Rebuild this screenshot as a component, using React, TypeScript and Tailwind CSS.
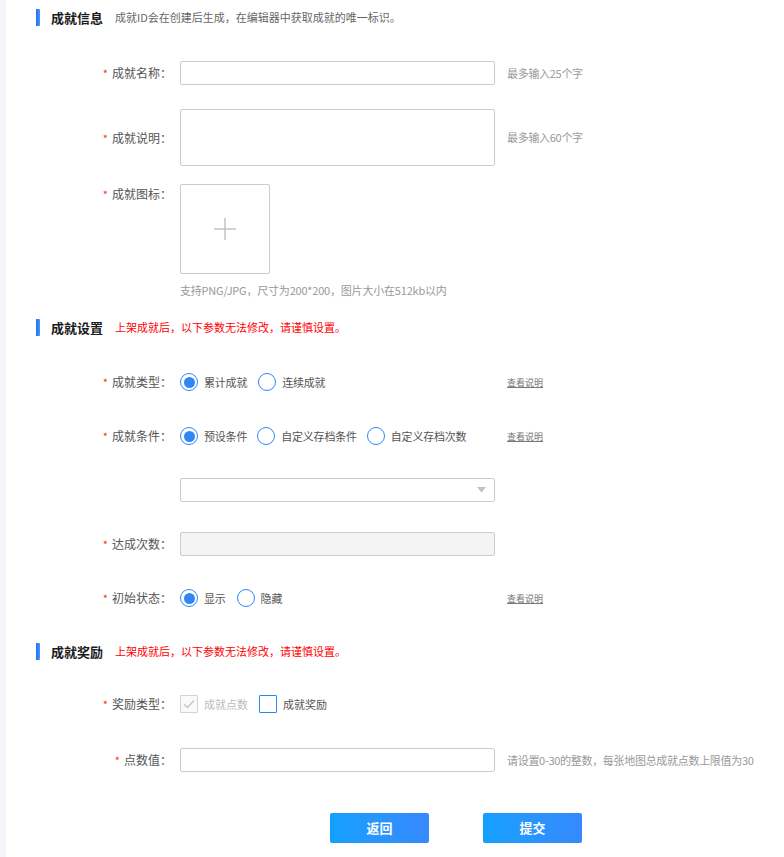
import type React from "react";

const FONT = { fontFamily: '"Noto Sans CJK SC", "Noto Sans", sans-serif' };

function SectionHeader({ title, note, warn }: { title: string; note: string; warn?: boolean }) {
  return (
    <div className="flex items-center h-[18px]">
      <div className="w-[4px] h-[17px] bg-gradient-to-r from-[#1a73f0] to-[#4a95f7] rounded-r-[1px]" />
      <span className="ml-[11px] text-[13px] font-bold text-[#1c1c1c] leading-none">{title}</span>
      <span className={`ml-[12px] text-[11px] leading-none ${warn ? "text-[#ff0000]" : "text-[#666]"}`}>{note}</span>
    </div>
  );
}

function Row({
  label,
  top,
  align = "center",
  children,
}: {
  label: string;
  top: string;
  align?: "center" | "start";
  children: React.ReactNode;
}) {
  return (
    <div className={`flex ${align === "center" ? "items-center" : "items-start"} ${top}`}>
      <label className={`w-[144px] pr-[8px] text-right text-[12px] text-[#555] leading-none ${align === "start" ? "pt-[4px]" : ""}`}>
        <span className="text-[#ff2d2d] mr-[4px] text-[11px]">*</span>
        {label}：
      </label>
      {children}
    </div>
  );
}

function Radio({ checked, label }: { checked?: boolean; label: string }) {
  return (
    <div className="flex items-center gap-[6px]">
      <span className="w-[18px] h-[18px] rounded-full border-[1.5px] border-[#2f86f6] flex items-center justify-center bg-white">
        {checked && <span className="w-[11px] h-[11px] rounded-full bg-[#2f86f6]" />}
      </span>
      <span className="text-[11px] text-[#555] leading-none tracking-[-0.2px]">{label}</span>
    </div>
  );
}

function Hint({ text }: { text: string }) {
  return <span className="ml-[12px] text-[11px] text-[#999] leading-none tracking-[-0.3px]">{text}</span>;
}

function HelpLink() {
  return <span className="ml-[13px] text-[9px] text-[#777] underline leading-none">查看说明</span>;
}

export default function App() {
  return (
    <div className="flex min-h-screen bg-white" style={FONT}>
      <div className="w-[6px] shrink-0 bg-[#f4f5f9]" />
      <div className="flex-1 pl-[30px] pt-[8px] pb-[14px]">
        <SectionHeader title="成就信息" note="成就ID会在创建后生成，在编辑器中获取成就的唯一标识。" />

        <Row label="成就名称" top="mt-[35px]">
          <div className="w-[315px] h-[24px] border border-[#c8ccd3] rounded-[2px] bg-white" />
          <Hint text="最多输入25个字" />
        </Row>

        <Row label="成就说明" top="mt-[24px]">
          <div className="w-[315px] h-[57px] border border-[#c8ccd3] rounded-[2px] bg-white" />
          <Hint text="最多输入60个字" />
        </Row>

        <Row label="成就图标" top="mt-[18px]" align="start">
          <div className="flex flex-col">
            <div className="w-[90px] h-[90px] border border-[#c8ccd3] rounded-[2px] flex items-center justify-center">
              <svg width="24" height="24" viewBox="0 0 24 24">
                <path d="M12 1v22M1 12h22" stroke="#c4c4c4" strokeWidth="1.5" />
              </svg>
            </div>
            <span className="mt-[11px] text-[11px] text-[#999] leading-none tracking-[-0.2px]">
              支持PNG/JPG，尺寸为200*200，图片大小在512kb以内
            </span>
          </div>
        </Row>

        <div className="mt-[22px]">
          <SectionHeader title="成就设置" note="上架成就后，以下参数无法修改，请谨慎设置。" warn />
        </div>

        <Row label="成就类型" top="mt-[34px] h-[24px]">
          <div className="w-[314px] flex items-center gap-[11px]">
            <Radio checked label="累计成就" />
            <Radio label="连续成就" />
          </div>
          <HelpLink />
        </Row>

        <Row label="成就条件" top="mt-[30px] h-[24px]">
          <div className="w-[314px] flex items-center gap-[10px]">
            <Radio checked label="预设条件" />
            <Radio label="自定义存档条件" />
            <Radio label="自定义存档次数" />
          </div>
          <HelpLink />
        </Row>

        <div className="flex mt-[30px]">
          <div className="w-[144px]" />
          <div className="w-[315px] h-[24px] border border-[#c8ccd3] rounded-[2px] bg-white flex items-center justify-end pr-[8px]">
            <svg width="9" height="6" viewBox="0 0 9 6">
              <path d="M0 0h9L4.5 5.5z" fill="#c0c0c0" />
            </svg>
          </div>
        </div>

        <Row label="达成次数" top="mt-[30px]">
          <div className="w-[315px] h-[24px] border border-[#c8ccd3] rounded-[2px] bg-[#f4f4f4]" />
        </Row>

        <Row label="初始状态" top="mt-[30px] h-[24px]">
          <div className="w-[314px] flex items-center gap-[11px]">
            <Radio checked label="显示" />
            <Radio label="隐藏" />
          </div>
          <HelpLink />
        </Row>

        <div className="mt-[32px]">
          <SectionHeader title="成就奖励" note="上架成就后，以下参数无法修改，请谨慎设置。" warn />
        </div>

        <Row label="奖励类型" top="mt-[32px] h-[24px]">
          <div className="flex items-center">
            <span className="w-[18px] h-[18px] border border-[#cfd2d7] rounded-[1px] bg-[#fafafa] flex items-center justify-center">
              <svg width="12" height="10" viewBox="0 0 12 10">
                <path d="M1 5.2l3.4 3.3L11 1.5" stroke="#c4c4c4" strokeWidth="1.3" fill="none" />
              </svg>
            </span>
            <span className="ml-[6px] text-[11px] text-[#bbb] leading-none">成就点数</span>
            <span className="ml-[11px] w-[18px] h-[18px] border-[1.5px] border-[#2f86f6] rounded-[1px] bg-white" />
            <span className="ml-[6px] text-[11px] text-[#555] leading-none">成就奖励</span>
          </div>
        </Row>

        <Row label="点数值" top="mt-[32px]">
          <div className="w-[315px] h-[24px] border border-[#c8ccd3] rounded-[2px] bg-white" />
          <Hint text="请设置0-30的整数，每张地图总成就点数上限值为30" />
        </Row>

        <div className="flex mt-[41px] pl-[294px] gap-[54px]">
          <button className="w-[99px] h-[30px] rounded-[2px] bg-gradient-to-r from-[#12a0ff] to-[#3589fd] text-white text-[13px] font-bold">
            返回
          </button>
          <button className="w-[99px] h-[30px] rounded-[2px] bg-gradient-to-r from-[#12a0ff] to-[#3589fd] text-white text-[13px] font-bold">
            提交
          </button>
        </div>
      </div>
    </div>
  );
}
